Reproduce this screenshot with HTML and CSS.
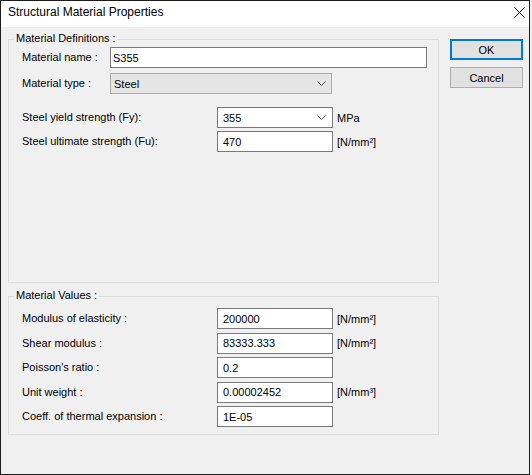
FILE: index.html
```html
<!DOCTYPE html>
<html>
<head>
<meta charset="utf-8">
<link rel="stylesheet" href="styles.css">
</head>
<body>
<div class="window">
  <div class="titlebar">
    <span class="title">Structural Material Properties</span>
    <svg class="close" width="11" height="11" viewBox="0 0 11 11"><path d="M0.5 0.5 L10.5 10.5 M10.5 0.5 L0.5 10.5" stroke="#000" stroke-width="1" fill="none"/></svg>
  </div>
  <div class="body">
    <div class="main">
      <div class="group group-def">
        <div class="group-title">Material Definitions :</div>
        <div class="row">
          <span class="label label-short">Material name :</span>
          <input class="field field-name" type="text" value="S355">
        </div>
        <div class="row row-type">
          <span class="label label-short">Material type :</span>
          <div class="combo combo-type"><span class="combo-text">Steel</span><svg class="chev" width="9" height="5" viewBox="0 0 9 5"><path d="M0.5 0.5 L4.5 4.5 L8.5 0.5" stroke="#4a4a4a" fill="none"/></svg></div>
        </div>
        <div class="row row-fy">
          <span class="label label-long">Steel yield strength (Fy):</span>
          <div class="combo combo-fy"><span class="combo-text">355</span><svg class="chev" width="9" height="5" viewBox="0 0 9 5"><path d="M0.5 0.5 L4.5 4.5 L8.5 0.5" stroke="#4a4a4a" fill="none"/></svg></div>
          <span class="unit">MPa</span>
        </div>
        <div class="row row-fu">
          <span class="label label-long">Steel ultimate strength (Fu):</span>
          <input class="field field-num" type="text" value="470">
          <span class="unit">[N/mm²]</span>
        </div>
      </div>
      <div class="group group-val">
        <div class="group-title">Material Values :</div>
        <div class="row">
          <span class="label label-long">Modulus of elasticity :</span>
          <input class="field field-num" type="text" value="200000">
          <span class="unit">[N/mm²]</span>
        </div>
        <div class="row">
          <span class="label label-long">Shear modulus :</span>
          <input class="field field-num" type="text" value="83333.333">
          <span class="unit">[N/mm²]</span>
        </div>
        <div class="row">
          <span class="label label-long">Poisson's ratio :</span>
          <input class="field field-num" type="text" value="0.2">
        </div>
        <div class="row">
          <span class="label label-long">Unit weight :</span>
          <input class="field field-num" type="text" value="0.00002452">
          <span class="unit">[N/mm³]</span>
        </div>
        <div class="row">
          <span class="label label-long">Coeff. of thermal expansion :</span>
          <input class="field field-num" type="text" value="1E-05">
        </div>
      </div>
    </div>
    <div class="buttons">
      <div class="btn btn-default">OK</div>
      <div class="btn">Cancel</div>
    </div>
  </div>
</div>
</body>
</html>
```
FILE: styles.css
```css
html, body {
  margin: 0;
  background: #f0f0f0;
}
body {
  font-family: "Liberation Sans", Arial, sans-serif;
  font-size: 11px;
  color: #000;
}
.window {
  width: 530px;
  height: 475px;
  box-sizing: border-box;
  border: 1px solid #1c1c1c;
  background: #f0f0f0;
  display: flex;
  flex-direction: column;
}
.titlebar {
  height: 26px;
  flex: none;
  background: #fff;
  display: flex;
  align-items: flex-start;
}
.title {
  font-size: 12px;
  line-height: 14px;
  margin: 4px 0 0 7px;
}
.close {
  margin: 6px 4px 0 auto;
  display: block;
}
.body {
  display: flex;
  align-items: flex-start;
  padding: 12px 0 0 7px;
}
.main {
  width: 431px;
  display: flex;
  flex-direction: column;
}
.group {
  position: relative;
  border: 1px solid #dcdcdc;
  box-sizing: border-box;
  display: flex;
  flex-direction: column;
}
.group-def {
  height: 244px;
  padding: 7px 0 0 13px;
}
.group-val {
  height: 139px;
  margin-top: 13px;
  padding: 11px 0 0 13px;
  gap: 3.5px;
}
.group-title {
  position: absolute;
  top: -8px;
  left: 5px;
  padding: 0 2px;
  line-height: 13px;
  background: #f0f0f0;
}
.row {
  display: flex;
  align-items: center;
  height: 21px;
}
.row-type { margin-top: 5px; }
.row-fy { margin-top: 13px; }
.row-fu { margin-top: 3px; }
.label {
  flex: none;
  line-height: 13px;
}
.label-short { width: 88px; }
.label-long { width: 195px; }
.field {
  height: 21px;
  box-sizing: border-box;
  border: 1px solid #7a7a7a;
  background: #fff;
  font: inherit;
  color: #000;
  margin: 0;
  outline: none;
}
.field-name {
  width: 317px;
  padding: 0 2px;
}
.field-num {
  width: 116px;
  padding: 0 5px;
}
.combo {
  height: 21px;
  box-sizing: border-box;
  display: flex;
  align-items: center;
  justify-content: space-between;
}
.combo-type {
  width: 222px;
  border: 1px solid #adadad;
  background: #e5e5e5;
  padding: 0 5px 0 3px;
}
.combo-fy {
  width: 116px;
  border: 1px solid #7a7a7a;
  background: #fff;
  padding: 0 6px 0 5px;
}
.chev { display: block; }
.unit {
  margin-left: 4px;
}
.buttons {
  width: 73px;
  margin-left: 11px;
  display: flex;
  flex-direction: column;
  gap: 7px;
}
.btn {
  height: 21px;
  box-sizing: border-box;
  border: 1px solid #adadad;
  background: #e1e1e1;
  display: flex;
  align-items: center;
  justify-content: center;
}
.btn-default {
  border: 2px solid #0078d7;
}
```
